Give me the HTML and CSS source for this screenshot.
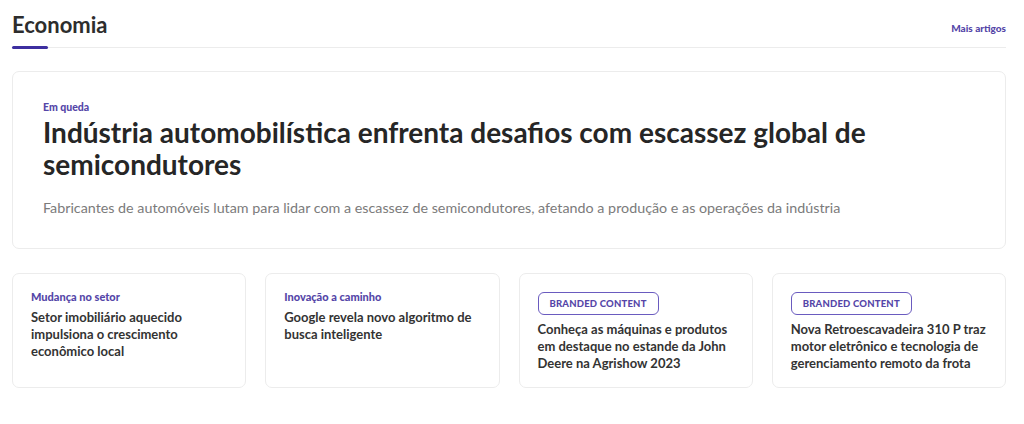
FILE: index.html
```html
<!DOCTYPE html>
<html lang="pt-BR">
<head>
    <meta charset="UTF-8">
    <meta name="viewport" content="width=device-width, initial-scale=1.0">
    <title>Economia</title>
    <link rel="stylesheet" href="styles.css">
</head>
<body>
    <section class="section">
        <div class="section-header">
            <h2 class="section-title">Economia</h2>
            <a class="more-link" href="#">Mais artigos</a>
        </div>

        <article class="featured">
            <span class="kicker">Em queda</span>
            <h1 class="featured-title">Indústria automobilística enfrenta desafios com escassez global de semicondutores</h1>
            <p class="featured-desc">Fabricantes de automóveis lutam para lidar com a escassez de semicondutores, afetando a produção e as operações da indústria</p>
        </article>

        <div class="cards">
            <article class="card">
                <span class="kicker small">Mudança no setor</span>
                <h3 class="card-title">Setor imobiliário aquecido impulsiona o crescimento econômico local</h3>
            </article>
            <article class="card">
                <span class="kicker small">Inovação a caminho</span>
                <h3 class="card-title">Google revela novo algoritmo de busca inteligente</h3>
            </article>
            <article class="card">
                <span class="badge">BRANDED CONTENT</span>
                <h3 class="card-title">Conheça as máquinas e produtos em destaque no estande da John Deere na Agrishow 2023</h3>
            </article>
            <article class="card">
                <span class="badge">BRANDED CONTENT</span>
                <h3 class="card-title">Nova Retroescavadeira 310 P traz motor eletrônico e tecnologia de gerenciamento remoto da frota</h3>
            </article>
        </div>
    </section>
</body>
</html>
```

FILE: styles.css
```css
* {
    box-sizing: border-box;
}
body {
    margin: 0;
    background: #fff;
    font-family: Lato, "Noto Sans", sans-serif;
    color: #2b2b2b;
}
.section {
    padding: 0 18px 0 12px;
}
.section-header {
    display: flex;
    justify-content: space-between;
    align-items: flex-end;
    height: 48px;
    border-bottom: 1px solid #ececec;
}
.section-title {
    margin: 0 0 9px;
    font-size: 22px;
    font-weight: 700;
    color: #2d2d2d;
    position: relative;
}
.section-title::after {
    content: "";
    position: absolute;
    left: 0;
    bottom: -11px;
    width: 36px;
    height: 3px;
    background: #3d2fa0;
    border-radius: 2px;
}
.more-link {
    margin-bottom: 13px;
    font-size: 10px;
    font-weight: 900;
    color: #5546a8;
    text-decoration: none;
}
.featured {
    margin-top: 23px;
    border: 1px solid #ececec;
    border-radius: 7px;
    height: 178px;
    padding: 29px 30px 0;
    display: flex;
    flex-direction: column;
}
.kicker {
    font-size: 10.5px;
    font-weight: 900;
    color: #5546a8;
}
.featured-title {
    margin: 3px 0 0;
    font-size: 28px;
    line-height: 32px;
    font-weight: 700;
    color: #262626;
}
.featured-desc {
    margin: 19px 0 0;
    font-size: 14.3px;
    color: #7b7b7b;
}
.cards {
    margin-top: 24px;
    display: grid;
    grid-template-columns: repeat(4, 1fr);
    gap: 19px;
}
.card {
    border: 1px solid #ececec;
    border-radius: 7px;
    height: 115px;
    padding: 16px 18px 0;
    display: flex;
    flex-direction: column;
    align-items: flex-start;
}
.kicker.small {
    font-size: 11px;
}
.card-title {
    margin: 6px 0 0;
    font-size: 13px;
    line-height: 17px;
    font-weight: 700;
    color: #333;
}
.badge {
    margin-top: 2px;
    border: 1px solid #6a5bbf;
    border-radius: 6px;
    padding: 5px 11px;
    font-size: 9.5px;
    font-weight: 900;
    letter-spacing: 0.2px;
    color: #5546a8;
}
```
